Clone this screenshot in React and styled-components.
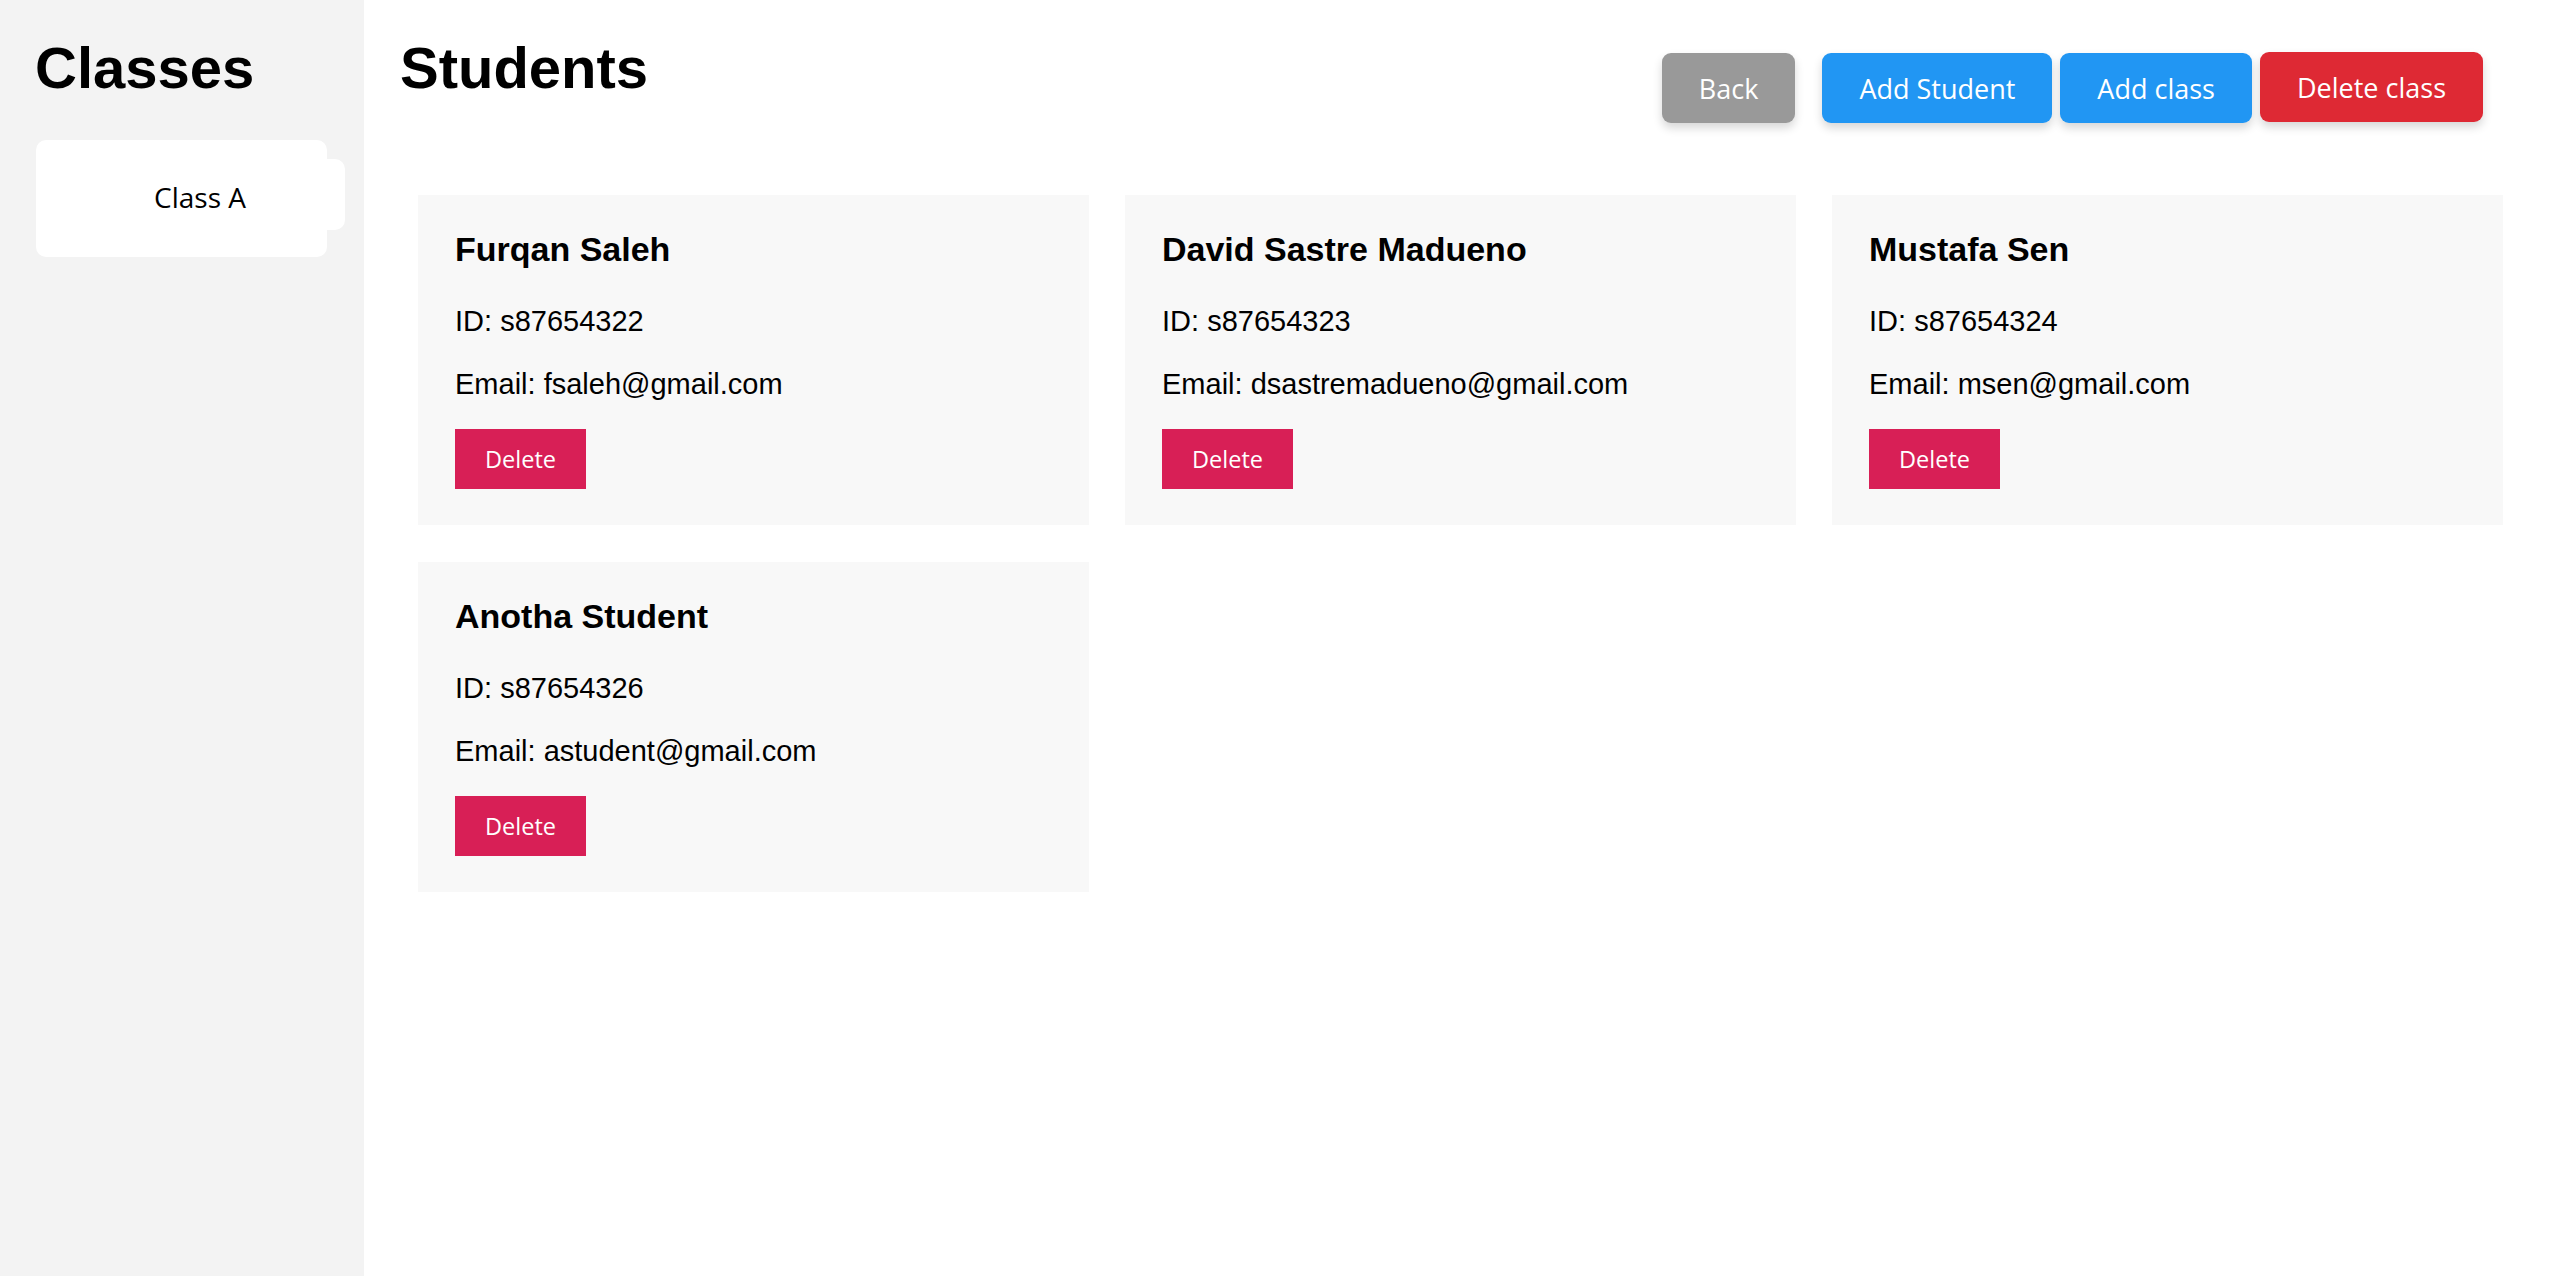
import React from "react";
import styled, { createGlobalStyle } from "styled-components";

const GlobalStyle = createGlobalStyle`
  html, body {
    margin: 0;
    padding: 0;
    background: #ffffff;
    font-family: "Liberation Sans", Arial, sans-serif;
    color: #000;
  }
  * { box-sizing: border-box; }
`;

const Layout = styled.div`
  display: flex;
  min-height: 100vh;
`;

const Sidebar = styled.aside`
  width: 364px;
  flex: 0 0 364px;
  background: #f3f3f3;
  padding: 36px 35px 35px 35px;
`;

const Heading = styled.h1`
  margin: 0;
  font-family: "Liberation Sans", Arial, sans-serif;
  font-weight: 700;
  font-size: 58px;
  line-height: 64px;
`;

const ClassCard = styled.div`
  margin: 40px 0 0 1px;
  width: 291px;
  background: #ffffff;
  border-radius: 10px;
  padding: 19px 0 27px 19px;
`;

const ClassButton = styled.button`
  display: flex;
  align-items: center;
  justify-content: center;
  width: 290px;
  height: 71px;
  border: none;
  border-radius: 10px;
  background: #ffffff;
  color: #000;
  font-family: "Open Sans", "Noto Sans", sans-serif;
  font-size: 28px;
  padding: 4px 0 0;
  cursor: pointer;
`;

const Main = styled.main`
  flex: 1;
  padding: 36px 0 35px 36px;
`;

const Header = styled.div`
  display: flex;
  justify-content: space-between;
  align-items: flex-start;
  padding-right: 76px;
`;

const Actions = styled.div`
  display: flex;
  gap: 8px;
  margin-top: 17px;
`;

const colors = {
  back: "#999999",
  primary: "#2196f3",
  danger: "#de2934",
};

const ActionButton = styled.button`
  height: 70px;
  padding: 0 37px;
  border: none;
  border-radius: 9px;
  background: ${(p) => colors[p.$variant]};
  color: #ffffff;
  font-family: "Open Sans", "Noto Sans", sans-serif;
  font-size: 27px;
  white-space: nowrap;
  box-shadow: 0 5px 10px rgba(0, 0, 0, 0.16);
  margin-right: ${(p) => (p.$spaced ? "19px" : "0")};
  margin-top: ${(p) => (p.$raised ? "-1px" : "0")};
  cursor: pointer;
`;

const Grid = styled.div`
  display: grid;
  grid-template-columns: repeat(3, 1fr);
  column-gap: 36px;
  row-gap: 37px;
  margin: 72px 56px 0 18px;
`;

const Card = styled.div`
  background: #f8f8f8;
  padding: 35px 37px 36px 37px;
  display: flex;
  flex-direction: column;
  align-items: flex-start;
`;

const Name = styled.h3`
  margin: 0 0 37px;
  font-size: 34px;
  line-height: 38px;
  font-weight: 700;
`;

const Info = styled.p`
  margin: 0 0 ${(p) => p.$gap}px;
  font-size: 29px;
  line-height: 32px;
`;

const DeleteButton = styled.button`
  height: 60px;
  padding: 0 30px;
  border: none;
  border-radius: 0;
  background: #d81f56;
  color: #ffffff;
  font-family: "Open Sans", "Noto Sans", sans-serif;
  font-size: 23.5px;
  cursor: pointer;
`;

const students = [
  { name: "Furqan Saleh", id: "s87654322", email: "fsaleh@gmail.com" },
  { name: "David Sastre Madueno", id: "s87654323", email: "dsastremadueno@gmail.com" },
  { name: "Mustafa Sen", id: "s87654324", email: "msen@gmail.com" },
  { name: "Anotha Student", id: "s87654326", email: "astudent@gmail.com" },
];

export default function App() {
  return (
    <>
      <GlobalStyle />
      <Layout>
        <Sidebar>
          <Heading>Classes</Heading>
          <ClassCard>
            <ClassButton>Class A</ClassButton>
          </ClassCard>
        </Sidebar>
        <Main>
          <Header>
            <Heading>Students</Heading>
            <Actions>
              <ActionButton $variant="back" $spaced>Back</ActionButton>
              <ActionButton $variant="primary">Add Student</ActionButton>
              <ActionButton $variant="primary">Add class</ActionButton>
              <ActionButton $variant="danger" $raised>Delete class</ActionButton>
            </Actions>
          </Header>
          <Grid>
            {students.map((s) => (
              <Card key={s.id}>
                <Name>{s.name}</Name>
                <Info $gap={31}>ID: {s.id}</Info>
                <Info $gap={29}>Email: {s.email}</Info>
                <DeleteButton>Delete</DeleteButton>
              </Card>
            ))}
          </Grid>
        </Main>
      </Layout>
    </>
  );
}
